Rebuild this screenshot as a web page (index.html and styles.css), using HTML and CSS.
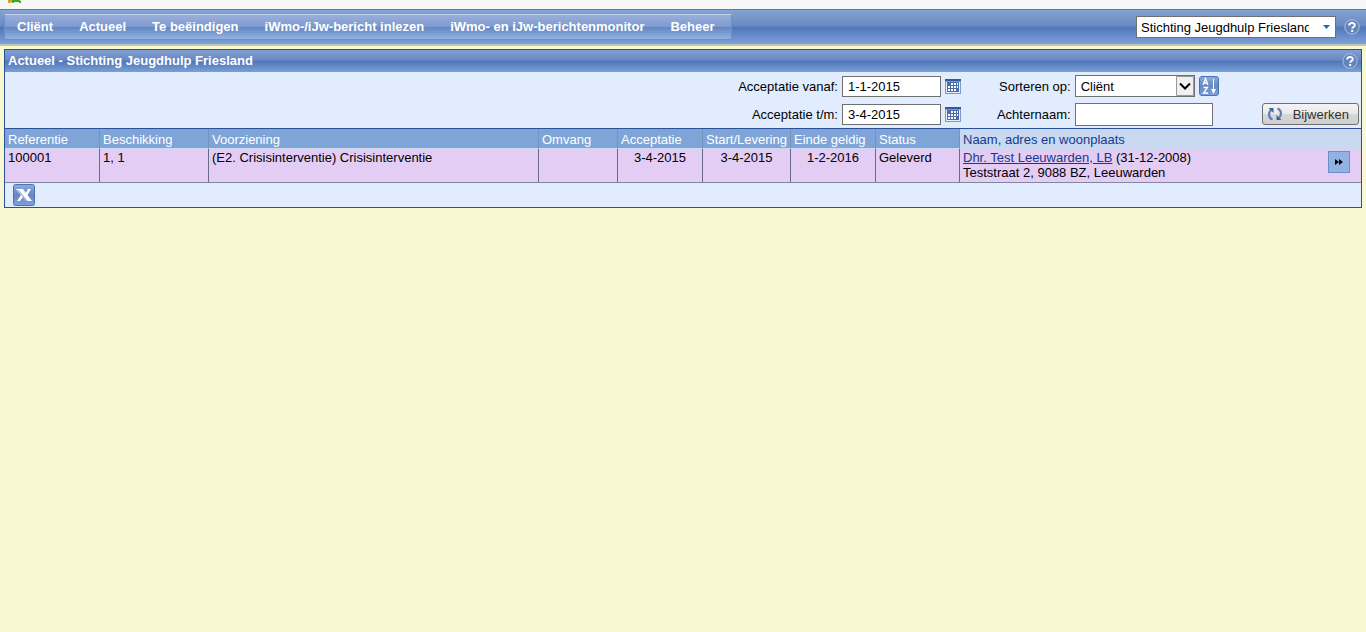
FILE: index.html
```html
<!DOCTYPE html>
<html lang="nl">
<head>
<meta charset="utf-8">
<title>Actueel - Stichting Jeugdhulp Friesland</title>
<link rel="stylesheet" href="styles.css">
</head>
<body>
<svg class="defs" aria-hidden="true">
  <defs>
    <linearGradient id="blue" x1="0" y1="0" x2="0" y2="1">
      <stop offset="0" stop-color="#8eaedb"/><stop offset=".5" stop-color="#6587c2"/><stop offset="1" stop-color="#7ea3da"/>
    </linearGradient>
    <symbol id="help" viewBox="0 0 16 16">
      <circle cx="8" cy="8" r="7.2" fill="#6384bd" stroke="#a9c0e4"/>
      <path d="M5.2 6.4C5.2 3.2 10.8 3.2 10.8 6.2C10.8 8 8.2 8 8.2 9.8M8.2 11v2" fill="none" stroke="#fff" stroke-width="2"/>
    </symbol>
    <symbol id="calendar" viewBox="0 0 16 15">
      <path d="M0 0h16v15H0z" fill="#8099c4"/><path d="M0 0h16v2H0z" fill="#35589a"/>
      <path d="M1 3h14v11H1z" fill="#e9eef8"/><path d="M2 3h12v10H2z" fill="#4a6cab"/>
      <path d="M6 4h2v2H6zM9 4h2v2H9zM12 4h1v2h-1zM3 7h2v2H3zM6 7h2v2H6zM9 7h2v2H9zM12 7h1v2h-1zM3 10h2v2H3zM6 10h2v2H6zM9 10h2v2H9z" fill="#fff"/>
    </symbol>
  </defs>
</svg>
<div class="strip">
  <svg class="logo" width="14" height="4" viewBox="0 0 14 4" aria-hidden="true"><path d="M4 0h8v1h1v2h-2V2H6v1H4z" fill="#37ad20"/><path d="M0 0h4v2H3v1H0z" fill="#e19a25"/></svg>
</div>
<header class="topbar">
  <nav class="menu">
    <a href="#">Cliënt</a><a href="#">Actueel</a><a href="#">Te beëindigen</a><a href="#">iWmo-/iJw-bericht inlezen</a><a href="#">iWmo- en iJw-berichtenmonitor</a><a href="#">Beheer</a>
  </nav>
  <div class="account">
    <span class="picker">
      <select class="org" aria-label="Organisatie"><option>Stichting Jeugdhulp Friesland</option></select>
      <svg class="org-arrow" width="7" height="4" viewBox="0 0 7 4" aria-hidden="true"><path d="M0 0h7L3.5 4z" fill="#2f62bd"/></svg>
    </span>
    <button class="icon-button" aria-label="Help"><svg width="16" height="16"><use href="#help"/></svg></button>
  </div>
</header>
<main class="panel">
  <div class="panel-title">
    <h1>Actueel - Stichting Jeugdhulp Friesland</h1>
    <button class="icon-button" aria-label="Help"><svg width="16" height="16"><use href="#help"/></svg></button>
  </div>
  <form class="filters">
    <div class="filter-grid dates">
      <label for="from">Acceptatie vanaf:</label>
      <input class="field date" id="from" type="text" value="1-1-2015">
      <button class="icon-button" type="button" aria-label="Kies datum vanaf"><svg width="16" height="15"><use href="#calendar"/></svg></button>
      <label for="until">Acceptatie t/m:</label>
      <input class="field date" id="until" type="text" value="3-4-2015">
      <button class="icon-button" type="button" aria-label="Kies datum t/m"><svg width="16" height="15"><use href="#calendar"/></svg></button>
    </div>
    <div class="filter-grid sorting">
      <label for="sort">Sorteren op:</label>
      <div class="sort-row">
        <span class="picker">
          <select class="field sort" id="sort"><option>Cliënt</option></select>
          <svg class="sort-arrow" width="18" height="20" viewBox="0 0 18 20" aria-hidden="true"><path d="M.5.5h17v19H.5z" fill="#f0f0f0" stroke="#999"/><path d="M4 7.500l5 5 5-5" fill="none" stroke="#000" stroke-width="2"/></svg>
        </span>
        <button class="icon-button" type="button" aria-label="Sorteervolgorde A-Z">
          <svg width="20" height="20" viewBox="0 0 20 20"><rect x=".5" y=".5" width="19" height="19" rx="2.5" fill="url(#blue)" stroke="#4c72b0"/><path d="M4 9l2.500-6.500L9 9M5 7h3M4.500 11.500h4L4.500 17h4.500" fill="none" stroke="#fff" stroke-width="1.3"/><path d="M14.500 3v12" stroke="#fff"/><path d="M12 13h5l-2.500 5z" fill="#fff"/></svg>
        </button>
      </div>
      <label for="surname">Achternaam:</label>
      <input class="field surname" id="surname" type="text">
    </div>
    <button class="refresh" type="button">
      <svg width="16" height="16" viewBox="0 0 16 16" aria-hidden="true"><path d="M5.500 13.500C1.500 12 1 7 4 4M10.500 2.500c4 1.500 4.500 6.500 1.500 9.500" fill="none" stroke="#5b7fb5" stroke-width="2.200"/><path d="M1.500 2H6.500v5zM14.500 14H9.500V9z" fill="#3c629f"/></svg>
      Bijwerken
    </button>
  </form>
  <table class="results">
    <colgroup><col class="c-ref"><col class="c-besch"><col class="c-voorz"><col class="c-omv"><col class="c-acc"><col class="c-start"><col class="c-einde"><col class="c-status"><col class="c-naam"></colgroup>
    <thead>
      <tr><th>Referentie</th><th>Beschikking</th><th>Voorziening</th><th>Omvang</th><th>Acceptatie</th><th>Start/Levering</th><th>Einde geldig</th><th>Status</th><th class="sorted">Naam, adres en woonplaats</th></tr>
    </thead>
    <tbody>
      <tr>
        <td>100001</td><td>1, 1</td><td>(E2. Crisisinterventie) Crisisinterventie</td><td></td><td class="day">3-4-2015</td><td class="day">3-4-2015</td><td class="day">1-2-2016</td><td>Geleverd</td>
        <td><div class="person"><div><a href="#">Dhr. Test Leeuwarden, LB</a> (31-12-2008)<br>Teststraat 2, 9088 BZ, Leeuwarden</div>
          <button class="open" aria-label="Openen"><svg width="8" height="6" viewBox="0 0 8 6"><path d="M0 0l4 3-4 3zM4 0l4 3-4 3z" fill="#000"/></svg></button></div></td>
      </tr>
    </tbody>
  </table>
  <div class="export">
    <button class="icon-button" aria-label="Exporteren naar Excel">
      <svg width="22" height="22" viewBox="0 0 22 22"><rect x=".5" y=".5" width="21" height="21" rx="2" fill="url(#blue)" stroke="#4c72b0"/><path d="M3 5h7l3 4 2-4h3l-3.500 6 4.500 6h-6l-3-4-3 4H4l4-6z" fill="#fff"/><path d="M5 6l9 11" stroke="#7092c8"/></svg>
    </button>
  </div>
</main>
</body>
</html>
```
FILE: styles.css
```css
* { box-sizing: border-box; }
body {
  margin: 0;
  background: #f9f9d1;
  color: #000;
  font: 13px/15px "Liberation Sans", Arial, sans-serif;
}
input, select, button { font: inherit; color: inherit; margin: 0; }
.defs { position: absolute; width: 0; height: 0; }
.strip { height: 10px; background: #f7f7f7; border-bottom: 1px solid #777; }
.logo { display: block; margin-left: 8px; }
.icon-button { display: flex; padding: 0; border: 0; background: none; }

.topbar {
  display: flex;
  justify-content: space-between;
  align-items: center;
  height: 36px;
  padding: 0 6px 0 4px;
  border-bottom: 2px solid #c4c4b4;
  background: linear-gradient(#83a3d3, #6b8bc3 45%, #5077b8 52%, #7da1da);
}
.menu {
  display: flex;
  gap: 2px;
  border: 1px solid #6b8fca;
  border-top-color: #c0d0ea;
  background: linear-gradient(#9aaedb, #7e9bd0 48%, #6487c4 52%, #92b3e2);
}
.menu a {
  padding: 4px 12px 5px;
  color: #fff;
  font-weight: bold;
  text-decoration: none;
}
.menu a:last-child { padding-right: 16px; }
.account { display: flex; align-items: center; gap: 8px; }
.picker { position: relative; display: flex; }
.org {
  appearance: none;
  width: 200px;
  height: 22px;
  padding: 0 26px 0 4px;
  border: 1px solid #707070;
  border-radius: 0;
  background: #fff;
}
.org-arrow { position: absolute; right: 6px; top: 9px; pointer-events: none; }

.panel {
  margin: 3px 4px 0;
  border: 1px solid #2a5197;
  background: #e1edff;
}
.panel-title {
  display: flex;
  justify-content: space-between;
  align-items: center;
  height: 22px;
  padding: 0 3px;
  background: linear-gradient(#809fd0, #6b88c3 45%, #5077b9 52%, #7aa0d6);
}
.panel-title h1 { margin: 0; padding-bottom: 2px; color: #fff; font-size: 13px; line-height: 15px; }

.filters {
  display: flex;
  justify-content: flex-end;
  padding: 3px 2px 3px 0;
}
.filter-grid { display: grid; align-items: center; column-gap: 4px; row-gap: 6px; grid-auto-rows: 22px; }
.filter-grid label { text-align: right; }
.dates { grid-template-columns: auto auto auto; margin-right: 36px; }
.sorting { grid-template-columns: auto auto; margin-right: 43px; }
.field { border: 1px solid #707070; border-radius: 0; background: #fff; }
.date { width: 99px; height: 21px; padding: 0 5px; }
.surname { width: 138px; height: 23px; padding: 0 5px; }
.sort { appearance: none; width: 120px; height: 22px; padding: 0 20px 0 5px; }
.sort-row { display: flex; align-items: center; gap: 4px; }
.sort-arrow { position: absolute; right: 1px; top: 1px; pointer-events: none; }
.refresh {
  display: flex;
  align-items: center;
  align-self: flex-end;
  gap: 10px;
  height: 22px;
  padding: 0 9px 0 4px;
  border: 1px solid #707070;
  border-radius: 3px;
  background: linear-gradient(#f4f4f4, #e9e9e9 50%, #d7d7d7 51%, #cfcfcf);
  color: #333;
}

.results { width: 100%; table-layout: fixed; border-collapse: separate; border-spacing: 0; border-top: 1px solid #2a5197; }
.c-ref { width: 95px; }
.c-besch { width: 109px; }
.c-voorz { width: 330px; }
.c-omv { width: 79px; }
.c-acc, .c-einde { width: 85px; }
.c-start { width: 88px; }
.c-status { width: 84px; }
.results th {
  height: 20px;
  padding: 3px 0 1px 3px;
  border-right: 1px solid #7592bd;
  border-bottom: 1px solid #c9d9f0;
  background: #7fa4d8;
  color: #fff;
  font-weight: normal;
  text-align: left;
  white-space: nowrap;
}
.results th.sorted { background: #c9d9f2; color: #16398a; }
.results td {
  height: 34px;
  padding: 1px 3px 2px;
  border-right: 1px solid #696b87;
  border-bottom: 1px solid #81879f;
  background: #e3cdf4;
  vertical-align: top;
}
.results th:last-child, .results td:last-child { border-right: 0; }
.results .day { text-align: center; }
.results a { color: #16398a; }
.person { display: flex; justify-content: space-between; padding-right: 8px; }
.open {
  display: flex;
  align-items: center;
  justify-content: center;
  width: 22px;
  height: 22px;
  margin-top: 1px;
  padding: 0;
  border: 1px solid #6b8fca;
  background: #92b3e1;
}
.export { padding: 1px 8px; }
```
